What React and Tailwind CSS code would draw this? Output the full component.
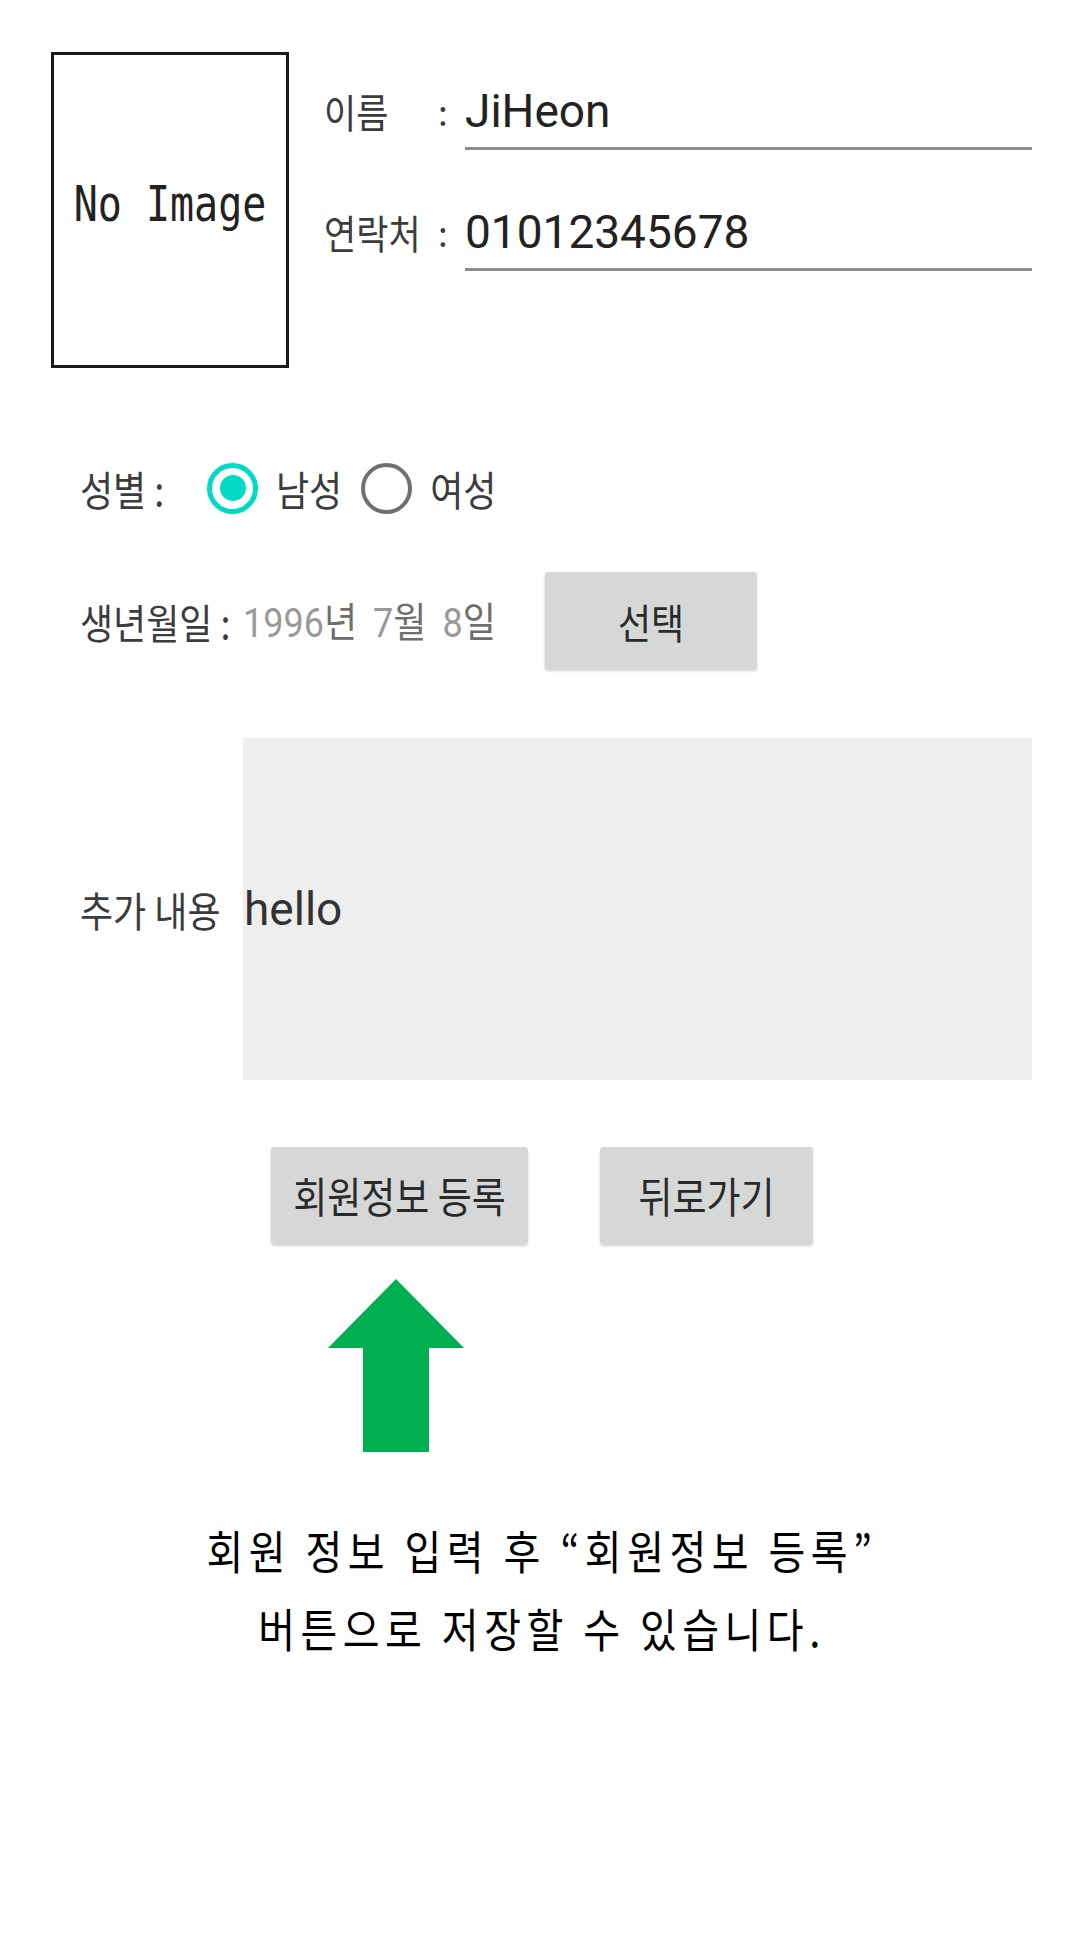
import React from "react";

function Radio({ checked }) {
  return checked ? (
    <div className="w-[51px] h-[51px] rounded-full border-[5px] border-[#03DAC5] flex items-center justify-center shrink-0">
      <div className="w-[26px] h-[26px] rounded-full bg-[#03DAC5]" />
    </div>
  ) : (
    <div className="w-[51px] h-[51px] rounded-full border-[4px] border-[#707070] shrink-0" />
  );
}

export default function App() {
  const kr = "font-['Noto_Sans_CJK_KR',sans-serif]";
  const ro = "font-['Roboto','Noto_Sans_CJK_KR',sans-serif]";
  const lab = "inline-block scale-y-[1.15]";
  return (
    <div className="w-[1084px] h-[1933px] bg-white flex flex-col">
      {/* top: image + name/phone */}
      <div className="flex pt-[52px] pl-[51px]">
        <div className="w-[238px] h-[316px] border-[3px] border-[#1a1a1a] flex items-center justify-center pb-[14px]">
          <span className="inline-block scale-y-[1.25] font-['DejaVu_Sans_Mono',monospace] text-[40px] text-[#222] leading-none">
            No Image
          </span>
        </div>
        <div className="flex flex-col pt-[31px] pl-[35px] w-[743px]">
          <div className="flex items-start">
            <div className={`${kr} w-[114px] text-[35px] leading-[56px] text-[#3c3c3c]`}><span className={lab}>이름</span></div>
            <div className={`${kr} w-[27px] text-[35px] leading-[56px] text-[#3c3c3c]`}>:</div>
            <div className={`${ro} flex-1 text-[46px] leading-[56px] pb-[8px] border-b-[3px] border-[#8c8c8c] text-[#222]`}>
              JiHeon
            </div>
          </div>
          <div className="flex items-start mt-[54px]">
            <div className={`${kr} w-[114px] text-[35px] leading-[56px] text-[#3c3c3c] whitespace-nowrap`}><span className={lab}>연락처</span></div>
            <div className={`${kr} w-[27px] text-[35px] leading-[56px] text-[#3c3c3c]`}>:</div>
            <div className={`${ro} flex-1 text-[46px] leading-[56px] pb-[8px] border-b-[3px] border-[#8c8c8c] text-[#222]`}>
              01012345678
            </div>
          </div>
        </div>
      </div>

      {/* gender */}
      <div className={`${kr} flex items-center pl-[80px] mt-[92px] h-[56px] text-[36px] text-[#3c3c3c]`}>
        <div className="w-[127px]"><span className={lab}>성별 :</span></div>
        <Radio checked />
        <div className="ml-[18px] mr-[19px]"><span className={lab}>남성</span></div>
        <Radio />
        <div className="ml-[18px]"><span className={lab}>여성</span></div>
      </div>

      {/* birth */}
      <div className={`${kr} flex items-center pl-[80px] mt-[56px] h-[97px] text-[36px]`}>
        <div className="w-[163px] text-[#3c3c3c] whitespace-nowrap"><span className={lab}>생년월일 :</span></div>
        <div className="w-[302px] text-[#6e6e6e] whitespace-nowrap">
          <span className={lab}>
            <span className="font-['Roboto',sans-serif] text-[#999]">1996</span>년
            <span className="ml-[16px] font-['Roboto',sans-serif] text-[#999]">7</span>월
            <span className="ml-[16px] font-['Roboto',sans-serif] text-[#999]">8</span>일
          </span>
        </div>
        <div className="w-[212px] h-[97px] bg-[#d6d7d7] rounded-[3px] shadow-[0_2px_3px_rgba(0,0,0,0.18)] flex items-center justify-center text-[#2a2a2a] text-[36px]">
          <span className={lab}>선택</span>
        </div>
      </div>

      {/* extra */}
      <div className="flex items-center pl-[80px] mt-[69px]">
        <div className={`${kr} w-[163px] text-[36px] text-[#3c3c3c] whitespace-nowrap`}><span className={lab}>추가 내용</span></div>
        <div className="w-[789px] h-[342px] bg-[#eeeeee] flex items-center">
          <span className={`${ro} text-[46px] text-[#333] pl-[1px]`}>hello</span>
        </div>
      </div>

      {/* buttons */}
      <div className={`${kr} flex pl-[271px] mt-[67px] text-[37px] text-[#2a2a2a]`}>
        <div className="w-[257px] h-[97px] bg-[#d6d7d7] rounded-[3px] shadow-[0_2px_3px_rgba(0,0,0,0.18)] flex items-center justify-center whitespace-nowrap">
          <span className={lab}>회원정보 등록</span>
        </div>
        <div className="ml-[72px] w-[213px] h-[97px] bg-[#d6d7d7] rounded-[3px] shadow-[0_2px_3px_rgba(0,0,0,0.18)] flex items-center justify-center whitespace-nowrap">
          <span className={lab}>뒤로가기</span>
        </div>
      </div>

      {/* arrow */}
      <div className="pl-[328px] mt-[35px]">
        <svg width="136" height="174" viewBox="0 0 136 174">
          <polygon points="68,0 136,69 101,69 101,173 35,173 35,69 0,69" fill="#00B050" />
        </svg>
      </div>

      {/* instruction */}
      <div className={`${kr} mt-[57px] flex flex-col items-center text-[40px] leading-[78px] tracking-[5.5px] text-black`}>
        <div className="scale-y-[1.15] whitespace-nowrap">회원 정보 입력 후 “회원정보 등록”</div>
        <div className="scale-y-[1.15] whitespace-nowrap">버튼으로 저장할 수 있습니다.</div>
      </div>
    </div>
  );
}
